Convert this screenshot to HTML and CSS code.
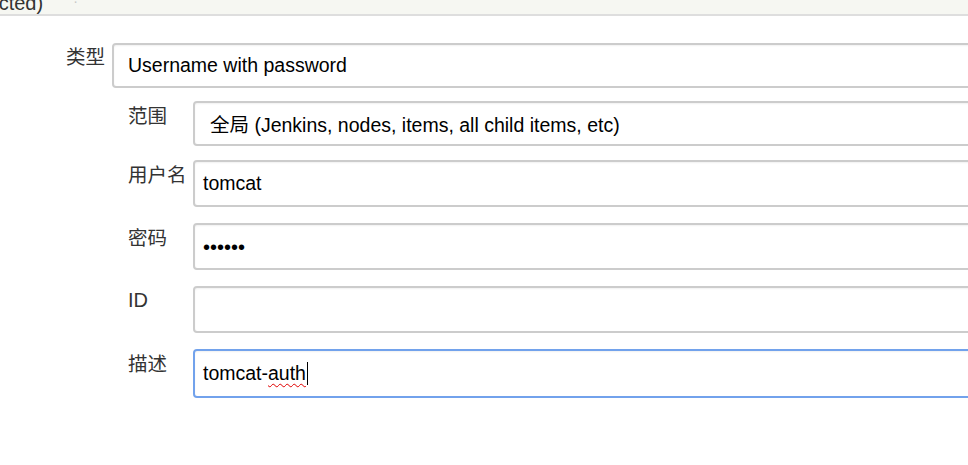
FILE: index.html
```html
<!DOCTYPE html>
<html lang="zh">
<head>
<meta charset="utf-8">
<link rel="stylesheet" href="styles.css">
</head>
<body>
<div class="topbar"><span class="topbar-text">(Selected)</span><span class="topbar-mark">·</span></div>
<div class="form">
  <div class="row row-type">
    <div class="label label-type">类型</div>
    <div class="field select field-type">Username with password</div>
  </div>
  <div class="nested">
    <div class="row row-scope">
      <div class="label">范围</div>
      <div class="field select field-scope">全局 (Jenkins, nodes, items, all child items, etc)</div>
    </div>
    <div class="row">
      <div class="label">用户名</div>
      <div class="field">tomcat</div>
    </div>
    <div class="row">
      <div class="label">密码</div>
      <div class="field password">••••••</div>
    </div>
    <div class="row">
      <div class="label label-id">ID</div>
      <div class="field"></div>
    </div>
    <div class="row">
      <div class="label">描述</div>
      <div class="field focused">tomcat-<span class="misspelled">auth</span><span class="caret"></span></div>
    </div>
  </div>
</div>
</body>
</html>
```
FILE: styles.css
```css
html, body {
  margin: 0;
  padding: 0;
  background: #fff;
  overflow: hidden;
  font-family: "Liberation Sans", Arial, "Noto Sans CJK SC", sans-serif;
  color: #000;
}

.topbar {
  height: 14px;
  background: #f6f7f2;
  border-bottom: 2px solid #dedede;
  overflow: hidden;
  display: flex;
  align-items: flex-end;
  gap: 30px;
}

.topbar-text {
  font-size: 20px;
  line-height: 20px;
  color: #333;
  margin-left: -48px;
  margin-bottom: 1px;
}

.topbar-mark {
  color: #c8c8c8;
  font-size: 14px;
  line-height: 14px;
  align-self: flex-start;
  margin-top: -6px;
}

.form {
  padding-top: 27px;
}

.row {
  display: flex;
  align-items: flex-start;
}

.row-type {
  padding-left: 66px;
}

.label {
  font-family: "Noto Sans CJK SC", "Liberation Sans", sans-serif;
  font-size: 19.5px;
  line-height: 22px;
  color: #333;
  width: 65px;
  flex: none;
  padding-top: 3px;
}

.label-type {
  width: 46px;
  padding-top: 2px;
}

.label-id {
  font-family: "Liberation Sans", sans-serif;
  font-size: 20px;
  padding-top: 3px;
}

.nested {
  padding-left: 128px;
  padding-top: 13px;
  display: flex;
  flex-direction: column;
  gap: 16px;
}

.row-scope {
  margin-bottom: -2px;
}

.field {
  flex: none;
  width: 900px;
  height: 43px;
  box-sizing: content-box;
  border: 2px solid #cccccc;
  border-radius: 4px;
  box-shadow: inset 0 1px 2px rgba(0, 0, 0, 0.06);
  display: flex;
  align-items: center;
  padding-left: 8px;
  font-size: 19.5px;
  color: #000;
  white-space: nowrap;
}

.field-type,
.field-scope {
  height: 41px;
}

.select {
  padding-left: 14px;
}

.nested .select {
  padding-left: 15px;
}

.password {
  font-size: 20px;
  font-family: "Liberation Sans", sans-serif;
  padding-top: 1px;
  box-sizing: border-box;
  height: 47px;
}

.focused {
  border-color: #72a2ec;
  height: 45px;
}

.misspelled {
  text-decoration: underline wavy #e00000;
  text-decoration-thickness: 1px;
  text-underline-offset: 3px;
}

.caret {
  display: inline-block;
  width: 1px;
  height: 23px;
  background: #000;
  margin-left: 1px;
}
```
